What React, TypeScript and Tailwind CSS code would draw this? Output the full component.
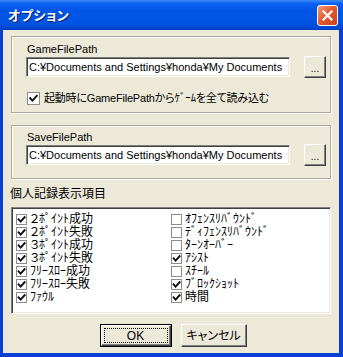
import React from 'react';

// checkbox drawn like the classic Windows one
const Check = ({ checked, size = 13 }: { checked: boolean; size?: number }) => (
    <svg width={size} height={size} viewBox={`0 0 ${size} ${size}`} className="shrink-0 block">
        <rect x="0.5" y="0.5" width={size - 1} height={size - 1} fill="#fff" stroke="#8c8c8c" />
        {checked && (
            <path
                d={size === 13 ? 'M3.2 6.2 L5.4 8.6 L9.8 3.8' : 'M2.6 5.4 L4.6 7.6 L8.6 3.2'}
                fill="none"
                stroke="#111"
                strokeWidth={1.9}
                strokeLinecap="square"
            />
        )}
    </svg>
);

const PathRow = ({ value }: { value: string }) => (
    <div className="flex items-start">
        <div className="w-[264px] h-[20px] bg-white border border-t-[#808080] border-l-[#808080] border-b-white border-r-white shadow-[inset_1px_1px_0_#404040,inset_-1px_-1px_0_#ECE9D8] pl-[2px] text-[11px] leading-[18px] text-black whitespace-nowrap overflow-hidden">
            {value}
        </div>
        <div className="ml-[14px] -mt-px w-[22px] h-[22px] bg-[#ECE9D8] border border-t-white border-l-white border-b-[#404040] border-r-[#404040] shadow-[inset_-1px_-1px_0_#808080] flex items-end justify-center pb-[3px] text-[10px] leading-[10px] text-black">
            ...
        </div>
    </div>
);

const App = () => {
    const left = [
        { label: '２ﾎﾟｲﾝﾄ成功', on: true },
        { label: '２ﾎﾟｲﾝﾄ失敗', on: true },
        { label: '３ﾎﾟｲﾝﾄ成功', on: true },
        { label: '３ﾎﾟｲﾝﾄ失敗', on: true },
        { label: 'ﾌﾘｰｽﾛｰ成功', on: true },
        { label: 'ﾌﾘｰｽﾛｰ失敗', on: true },
        { label: 'ﾌｧｳﾙ', on: true },
    ];
    const right = [
        { label: 'ｵﾌｪﾝｽﾘﾊﾞｳﾝﾄﾞ', on: false },
        { label: 'ﾃﾞｨﾌｪﾝｽﾘﾊﾞｳﾝﾄﾞ', on: false },
        { label: 'ﾀｰﾝｵｰﾊﾞｰ', on: false },
        { label: 'ｱｼｽﾄ', on: true },
        { label: 'ｽﾁｰﾙ', on: false },
        { label: 'ﾌﾞﾛｯｸｼｮｯﾄ', on: true },
        { label: '時間', on: true },
    ];
    const path = 'C:¥Documents and Settings¥honda¥My Documents';

    return (
        <div className="w-[343px] h-[357px] flex flex-col bg-[#ECE9D8] font-['Liberation_Sans','Noto_Sans_CJK_JP',sans-serif] [font-feature-settings:'palt'] select-none">

            {/* Title bar */}
            <div className="h-[30px] shrink-0 flex items-center justify-between pl-[8px] pr-[5px] bg-[linear-gradient(to_bottom,#3C8CF6_0%,#0B61F1_12%,#0055E6_35%,#0054E3_75%,#0048D4_92%,#003DC0_100%)]">
                <span className="text-[13px] font-bold text-white tracking-[0.5px] [text-shadow:1px_1px_0_#0A1E6E] font-['Noto_Sans_CJK_JP',sans-serif]">オプション</span>
                <div className="w-[21px] h-[21px] rounded-[3px] border border-white bg-[linear-gradient(135deg,#F29A7A_0%,#E45C30_45%,#C9401A_100%)] flex items-center justify-center">
                    <svg width="11" height="11" viewBox="0 0 11 11">
                        <path d="M1.5 1.5 L9.5 9.5 M9.5 1.5 L1.5 9.5" stroke="#fff" strokeWidth="2.2" strokeLinecap="square" />
                    </svg>
                </div>
            </div>

            {/* Body */}
            <div className="flex-1 flex flex-col border-l-[3px] border-r-[4px] border-b-[4px] border-[#0A3FD6] px-[8px]">

                {/* GameFilePath group */}
                <div className="mt-[6px] h-[77px] border border-[#ACA899] shadow-[inset_1px_1px_0_#fff,1px_1px_0_#fff] pl-[14px] pt-[6px] flex flex-col">
                    <span className="ml-px text-[11px] leading-[13px] text-black">GameFilePath</span>
                    <div className="mt-px"><PathRow value={path} /></div>
                    <div className="mt-[14px] ml-px flex items-center gap-[4px] h-[13px]">
                        <Check checked />
                        <span className="text-[11px] leading-[13px] tracking-[-0.2px] text-black whitespace-nowrap">起動時にGameFilePathからｹﾞｰﾑを全て読み込む</span>
                    </div>
                </div>

                {/* SaveFilePath group */}
                <div className="mt-[12px] h-[54px] border border-[#ACA899] shadow-[inset_1px_1px_0_#fff,1px_1px_0_#fff] pl-[14px] pt-[5px] flex flex-col">
                    <span className="ml-px text-[11px] leading-[13px] text-black">SaveFilePath</span>
                    <div className="mt-px"><PathRow value={path} /></div>
                </div>

                {/* Record items */}
                <span className="mt-[8px] -ml-px text-[12px] leading-[14px] text-black">個人記録表示項目</span>
                <div className="mt-[6px] h-[107px] bg-white border border-t-[#808080] border-l-[#808080] border-b-white border-r-white shadow-[inset_1px_1px_0_#404040,inset_-1px_-1px_0_#ECE9D8] pt-[5px] pl-[4px] flex">
                    <div className="w-[155px] flex flex-col">
                        {left.map((it) => (
                            <div key={it.label} className="h-[13px] flex items-center gap-[3px]">
                                <Check checked={it.on} size={11} />
                                <span className="text-[12px] leading-[13px] text-black whitespace-nowrap">{it.label}</span>
                            </div>
                        ))}
                    </div>
                    <div className="flex flex-col">
                        {right.map((it) => (
                            <div key={it.label} className="h-[13px] flex items-center gap-[3px]">
                                <Check checked={it.on} size={11} />
                                <span className="text-[12px] leading-[13px] text-black whitespace-nowrap">{it.label}</span>
                            </div>
                        ))}
                    </div>
                </div>

                {/* Buttons */}
                <div className="mt-[10px] flex justify-center gap-[9px] pl-[4px]">
                    <div className="w-[72px] h-[23px] border border-black">
                        <div className="w-full h-full bg-[#ECE9D8] border border-t-white border-l-white border-b-[#404040] border-r-[#404040] shadow-[inset_-1px_-1px_0_#808080] p-[2px]">
                            <div className="w-full h-full border border-dotted border-black flex items-center justify-center text-[12px] leading-[12px] text-black">OK</div>
                        </div>
                    </div>
                    <div className="w-[66px] h-[23px] bg-[#ECE9D8] border border-t-white border-l-white border-b-[#404040] border-r-[#404040] shadow-[inset_-1px_-1px_0_#808080] flex items-center justify-center text-[12px] leading-[12px] text-black">
                        キャンセル
                    </div>
                </div>
            </div>
        </div>
    );
};

export default App;
